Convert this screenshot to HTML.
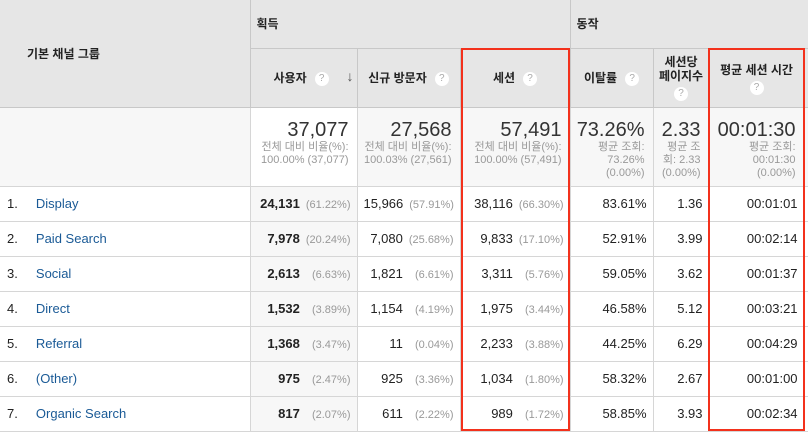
<!DOCTYPE html>
<html><head><meta charset="utf-8"><style>
*{margin:0;padding:0;box-sizing:border-box}
body{width:808px;height:432px;overflow:hidden;background:#fff;font-family:"Liberation Sans","Noto Sans CJK KR",sans-serif;color:#222;position:relative}
table{border-collapse:collapse;table-layout:fixed;width:808px;position:absolute;left:0;top:0}
td{border:1px solid #d6d6d6;font-size:13px;white-space:nowrap;overflow:hidden}
.h{background:#e6e6e6;border-color:#c8c8c8;font-size:12px;font-weight:bold;color:#222}
.s{background:#f7f7f7;text-align:right;vertical-align:top;padding:11px 8px 0 4px}
.s b{display:block;font-weight:normal;font-size:20px;color:#333;line-height:22px}
.s i{display:block;font-style:normal;font-size:11px;color:#999;line-height:13px}
.r td{height:35px;text-align:right;padding:0 6px}
.p{color:#999;font-size:11px;display:inline-block;margin-left:6px}
.q{display:inline-block;width:14px;height:14px;border-radius:50%;background:#fff;color:#aaa;font-size:10px;text-align:center;line-height:14px;font-weight:normal;vertical-align:middle;margin-left:8px}
.n{color:#1a5a96}
.box{position:absolute;border:2px solid #f3311c;}
</style></head><body>
<table>
<colgroup><col style="width:250px"><col style="width:107px"><col style="width:103px"><col style="width:110px"><col style="width:83px"><col style="width:56px"><col style="width:95px"><col style="width:4px"></colgroup>
<tr style="height:48px"><td class="h" rowspan="2" style="padding-left:27px;border-left:none;border-top:none">기본 채널 그룹</td><td class="h" colspan="3" style="padding-left:6px;border-top:none">획득</td><td class="h" colspan="4" style="padding-left:6px;border-top:none;border-right:none">동작</td></tr>
<tr style="height:59px">
<td class="h" style="padding-left:23px;position:relative">사용자<span class="q">?</span><span style="position:absolute;right:3px;top:19px;font-size:14px;color:#555">↓</span></td>
<td class="h" style="text-align:center">신규 방문자<span class="q">?</span></td>
<td class="h" style="text-align:center">세션<span class="q">?</span></td>
<td class="h" style="text-align:center">이탈률<span class="q">?</span></td>
<td class="h" style="text-align:center;line-height:14px;white-space:normal">세션당<br>페이지수<br><span class="q" style="margin:4px 0 0">?</span></td>
<td class="h" style="text-align:center;line-height:15px;vertical-align:top;padding-top:14px">평균 세션 시간<br><span class="q" style="margin:3px 0 0">?</span></td>
<td class="h" style="border-right:none"></td></tr>
<tr style="height:79px">
<td style="background:#f7f7f7;border-left:none"></td>
<td class="s" style="background:#fff"><b>37,077</b><i>전체 대비 비율(%):<br>100.00% (37,077)</i></td>
<td class="s"><b>27,568</b><i>전체 대비 비율(%):<br>100.03% (27,561)</i></td>
<td class="s"><b>57,491</b><i>전체 대비 비율(%):<br>100.00% (57,491)</i></td>
<td class="s"><b>73.26%</b><i>평균 조회:<br>73.26%<br>(0.00%)</i></td>
<td class="s" style="white-space:normal"><b>2.33</b><i>평균 조<br>회: 2.33<br>(0.00%)</i></td>
<td class="s"><b>00:01:30</b><i>평균 조회:<br>00:01:30<br>(0.00%)</i></td>
<td class="s" style="border-right:none"></td></tr>
<tr class="r"><td style="text-align:left;padding-left:7px;border-left:none">1.&nbsp;&nbsp;&nbsp;&nbsp;&nbsp;<span class="n">Display</span></td><td style="background:#f7f7f7"><b>24,131</b><span class="p">(61.22%)</span></td><td>15,966<span class="p">(57.91%)</span></td><td>38,116<span class="p">(66.30%)</span></td><td>83.61%</td><td>1.36</td><td>00:01:01</td><td style="border-right:none"></td></tr>
<tr class="r"><td style="text-align:left;padding-left:7px;border-left:none">2.&nbsp;&nbsp;&nbsp;&nbsp;&nbsp;<span class="n">Paid Search</span></td><td style="background:#f7f7f7"><b>7,978</b><span class="p">(20.24%)</span></td><td>7,080<span class="p">(25.68%)</span></td><td>9,833<span class="p">(17.10%)</span></td><td>52.91%</td><td>3.99</td><td>00:02:14</td><td style="border-right:none"></td></tr>
<tr class="r"><td style="text-align:left;padding-left:7px;border-left:none">3.&nbsp;&nbsp;&nbsp;&nbsp;&nbsp;<span class="n">Social</span></td><td style="background:#f7f7f7"><b>2,613</b><span class="p">&nbsp;&nbsp;(6.63%)</span></td><td>1,821<span class="p">&nbsp;&nbsp;(6.61%)</span></td><td>3,311<span class="p">&nbsp;&nbsp;(5.76%)</span></td><td>59.05%</td><td>3.62</td><td>00:01:37</td><td style="border-right:none"></td></tr>
<tr class="r"><td style="text-align:left;padding-left:7px;border-left:none">4.&nbsp;&nbsp;&nbsp;&nbsp;&nbsp;<span class="n">Direct</span></td><td style="background:#f7f7f7"><b>1,532</b><span class="p">&nbsp;&nbsp;(3.89%)</span></td><td>1,154<span class="p">&nbsp;&nbsp;(4.19%)</span></td><td>1,975<span class="p">&nbsp;&nbsp;(3.44%)</span></td><td>46.58%</td><td>5.12</td><td>00:03:21</td><td style="border-right:none"></td></tr>
<tr class="r"><td style="text-align:left;padding-left:7px;border-left:none">5.&nbsp;&nbsp;&nbsp;&nbsp;&nbsp;<span class="n">Referral</span></td><td style="background:#f7f7f7"><b>1,368</b><span class="p">&nbsp;&nbsp;(3.47%)</span></td><td>11<span class="p">&nbsp;&nbsp;(0.04%)</span></td><td>2,233<span class="p">&nbsp;&nbsp;(3.88%)</span></td><td>44.25%</td><td>6.29</td><td>00:04:29</td><td style="border-right:none"></td></tr>
<tr class="r"><td style="text-align:left;padding-left:7px;border-left:none">6.&nbsp;&nbsp;&nbsp;&nbsp;&nbsp;<span class="n">(Other)</span></td><td style="background:#f7f7f7"><b>975</b><span class="p">&nbsp;&nbsp;(2.47%)</span></td><td>925<span class="p">&nbsp;&nbsp;(3.36%)</span></td><td>1,034<span class="p">&nbsp;&nbsp;(1.80%)</span></td><td>58.32%</td><td>2.67</td><td>00:01:00</td><td style="border-right:none"></td></tr>
<tr class="r"><td style="text-align:left;padding-left:7px;border-left:none">7.&nbsp;&nbsp;&nbsp;&nbsp;&nbsp;<span class="n">Organic Search</span></td><td style="background:#f7f7f7"><b>817</b><span class="p">&nbsp;&nbsp;(2.07%)</span></td><td>611<span class="p">&nbsp;&nbsp;(2.22%)</span></td><td>989<span class="p">&nbsp;&nbsp;(1.72%)</span></td><td>58.85%</td><td>3.93</td><td>00:02:34</td><td style="border-right:none"></td></tr>
</table>
<div class="box" style="left:461px;top:48px;width:109px;height:383px"></div>
<div class="box" style="left:708px;top:48px;width:97px;height:383px"></div>
</body></html>
